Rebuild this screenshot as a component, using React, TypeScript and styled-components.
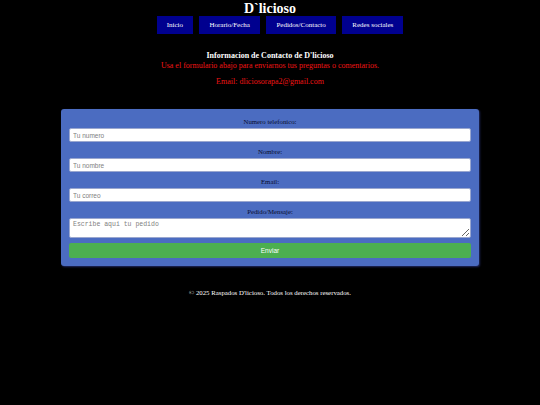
import React from "react";
import styled, { createGlobalStyle } from "styled-components";

const Global = createGlobalStyle`
  html, body {
    margin: 0;
    padding: 0;
    background: #000;
  }
  body {
    font-family: "Liberation Serif", "Times New Roman", serif;
    font-size: 8px;
    color: #fff;
  }
`;

const Page = styled.div`
  width: 540px;
  min-height: 405px;
  background: #000;
  display: flex;
  flex-direction: column;
  align-items: stretch;
`;

const Title = styled.h1`
  margin: 0;
  padding-top: 1px;
  font-size: 14px;
  line-height: 15px;
  font-weight: bold;
  text-align: center;
  color: #fff;
`;

const Nav = styled.ul`
  list-style: none;
  margin: 0;
  padding: 0 0 0 20px;
  display: flex;
  justify-content: center;
  gap: 6.5px;
`;

const NavItem = styled.li`
  background: #00008f;
  color: #fff;
  font-size: 7px;
  line-height: 10px;
  padding: 4px 10px;
`;

const Info = styled.section`
  margin-top: 17px;
  text-align: center;
`;

const InfoTitle = styled.h2`
  margin: 0;
  font-size: 8px;
  line-height: 10px;
  font-weight: bold;
  color: #fff;
`;

const RedText = styled.p<{ $gap?: number }>`
  margin: ${(p) => p.$gap ?? 0}px 0 0;
  font-size: 8px;
  line-height: 10px;
  color: #f01414;
`;

const Panel = styled.form`
  align-self: center;
  width: 418px;
  box-sizing: border-box;
  margin-top: 22px;
  padding: 8px;
  background: #4b6cc1;
  border-radius: 3px;
  box-shadow: 1px 1px 2px rgba(40, 50, 120, 0.8);
  display: flex;
  flex-direction: column;
  gap: 5px;
`;

const Group = styled.div`
  display: flex;
  flex-direction: column;
  gap: 1px;
`;

const Label = styled.label`
  display: block;
  text-align: center;
  font-size: 6.8px;
  line-height: 10px;
  color: #0a0e30;
`;

const Input = styled.input`
  box-sizing: border-box;
  width: 100%;
  height: 14px;
  margin: 0;
  padding: 0 3px;
  border: 1px solid #9aa7cf;
  border-radius: 2px;
  background: #fff;
  font-family: "Liberation Sans", Arial, sans-serif;
  font-size: 6.5px;
  outline: none;
  &::placeholder {
    color: #808080;
  }
`;

const TextArea = styled.textarea`
  box-sizing: border-box;
  width: 100%;
  height: 20px;
  margin: 0;
  padding: 2px 3px;
  border: 1px solid #9aa7cf;
  border-radius: 2px;
  background: #fff;
  font-family: "Liberation Mono", "DejaVu Sans Mono", monospace;
  font-size: 6.5px;
  resize: vertical;
  display: block;
  outline: none;
  &::placeholder {
    color: #808080;
  }
`;

const SubmitButton = styled.button`
  width: 100%;
  height: 15px;
  margin: 0;
  padding: 0;
  border: none;
  border-radius: 2px;
  background: #4caf50;
  color: #fff;
  font-family: "Liberation Sans", Arial, sans-serif;
  font-size: 6.5px;
`;

const Footer = styled.footer`
  margin-top: 22px;
  text-align: center;
  font-size: 6.8px;
  line-height: 10px;
  color: #fff;
`;

const navItems = ["Inicio", "Horario/Fecha", "Pedidos/Contacto", "Redes sociales"];

export default function App() {
  return (
    <Page>
      <Global />
      <Title>D`licioso</Title>
      <Nav>
        {navItems.map((n) => (
          <NavItem key={n}>{n}</NavItem>
        ))}
      </Nav>
      <Info>
        <InfoTitle>Informacion de Contacto de D'licioso</InfoTitle>
        <RedText>Usa el formulario abajo para enviarnos tus preguntas o comentarios.</RedText>
        <RedText $gap={6}>Email: dliciosorapa2@gmail.com</RedText>
      </Info>
      <Panel onSubmit={(e) => e.preventDefault()}>
        <Group>
          <Label>Numero telefonico:</Label>
          <Input placeholder="Tu numero" />
        </Group>
        <Group>
          <Label>Nombre:</Label>
          <Input placeholder="Tu nombre" />
        </Group>
        <Group>
          <Label>Email:</Label>
          <Input placeholder="Tu correo" />
        </Group>
        <Group>
          <Label>Pedido/Mensaje:</Label>
          <TextArea placeholder="Escribe aqui tu pedido" />
        </Group>
        <SubmitButton type="submit">Enviar</SubmitButton>
      </Panel>
      <Footer>© 2025 Raspados D'licioso. Todos los derechos reservados.</Footer>
    </Page>
  );
}
